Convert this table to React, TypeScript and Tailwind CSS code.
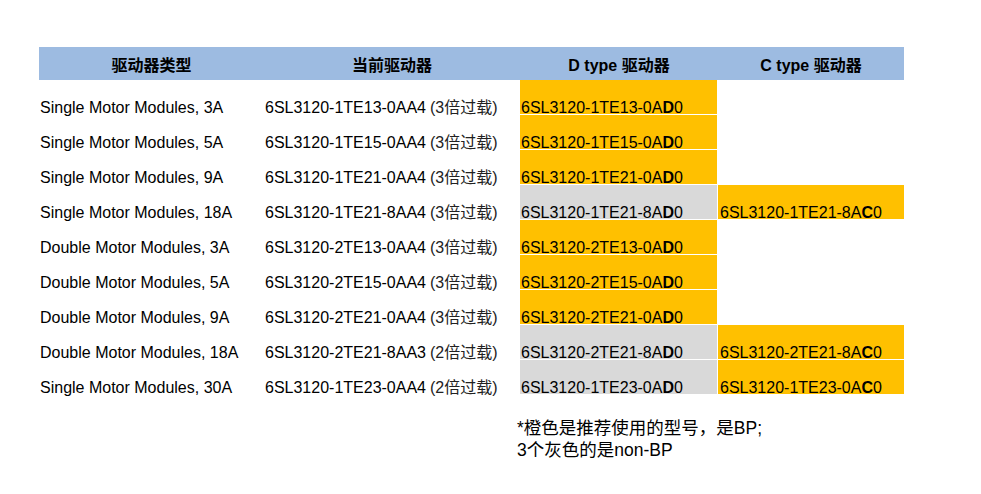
const font = { fontFamily: '"Liberation Sans", Arial, "Noto Sans CJK SC", sans-serif' };

type Row = {
  type: string;
  current: string;
  overload: string;
  d: string;
  c?: string;
  gray?: boolean;
};

const rows: Row[] = [
  { type: "Single Motor Modules, 3A", current: "6SL3120-1TE13-0AA4", overload: "(3倍过载)", d: "6SL3120-1TE13-0A" },
  { type: "Single Motor Modules, 5A", current: "6SL3120-1TE15-0AA4", overload: "(3倍过载)", d: "6SL3120-1TE15-0A" },
  { type: "Single Motor Modules, 9A", current: "6SL3120-1TE21-0AA4", overload: "(3倍过载)", d: "6SL3120-1TE21-0A" },
  { type: "Single Motor Modules, 18A", current: "6SL3120-1TE21-8AA4", overload: "(3倍过载)", d: "6SL3120-1TE21-8A", c: "6SL3120-1TE21-8A", gray: true },
  { type: "Double Motor Modules, 3A", current: "6SL3120-2TE13-0AA4", overload: "(3倍过载)", d: "6SL3120-2TE13-0A" },
  { type: "Double Motor Modules, 5A", current: "6SL3120-2TE15-0AA4", overload: "(3倍过载)", d: "6SL3120-2TE15-0A" },
  { type: "Double Motor Modules, 9A", current: "6SL3120-2TE21-0AA4", overload: "(3倍过载)", d: "6SL3120-2TE21-0A" },
  { type: "Double Motor Modules, 18A", current: "6SL3120-2TE21-8AA3", overload: "(2倍过载)", d: "6SL3120-2TE21-8A", c: "6SL3120-2TE21-8A", gray: true },
  { type: "Single Motor Modules, 30A", current: "6SL3120-1TE23-0AA4", overload: "(2倍过载)", d: "6SL3120-1TE23-0A", c: "6SL3120-1TE23-0A", gray: true },
];

const App = () => {
  return (
    <div className="min-h-[494px] w-[981px] bg-white text-black" style={font}>
      <div className="pl-[39px] pt-[47px]">
        {/* header */}
        <div className="grid h-[33px] w-[865px] grid-cols-[225px_256px_198px_186px] bg-[#9dbbe1] pt-[10px] text-[16px] font-bold leading-[18px]">
          <div className="text-center">驱动器类型</div>
          <div className="text-center">当前驱动器</div>
          <div className="text-center">D type 驱动器</div>
          <div className="text-center">C type 驱动器</div>
        </div>

        {/* rows */}
        {rows.map((r) => (
          <div key={r.current} className="grid h-[35px] w-[865px] grid-cols-[225px_256px_198px_186px] text-[16px] leading-[13px]">
            <div className="flex h-[34px] items-end pl-px">{r.type}</div>
            <div className="flex h-[34px] items-end pl-px">
              <span>{r.current}</span>
              <span className="ml-[4px] text-[#222]">{r.overload}</span>
            </div>
            <div className={`mr-px flex h-[34px] items-end pl-px ${r.gray ? "bg-[#d9d9d9]" : "bg-[#ffc000]"}`}>
              {r.d}
              <b>D</b>0
            </div>
            {r.c ? (
              <div className="flex h-[34px] items-end bg-[#ffc000] pl-[2px]">
                {r.c}
                <b>C</b>0
              </div>
            ) : (
              <div />
            )}
          </div>
        ))}

        {/* note */}
        <div className="ml-[478px] mt-[22px] text-[17.5px] leading-[22px]">
          <div>*橙色是推荐使用的型号，是BP;</div>
          <div>3个灰色的是non-BP</div>
        </div>
      </div>
    </div>
  );
};

export default App;
